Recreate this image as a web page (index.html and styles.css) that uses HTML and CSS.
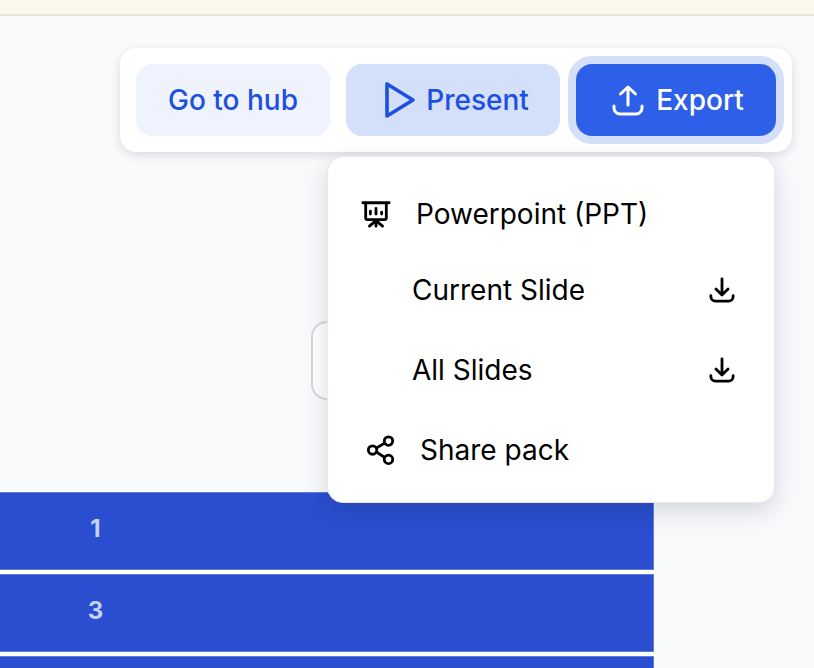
FILE: index.html
```html
<!DOCTYPE html>
<html lang="en">
<head>
  <meta charset="UTF-8">
  <title>Pack editor</title>
  <link rel="stylesheet" href="styles.css">
</head>
<body>
  <div class="banner"></div>
  <div class="main">
    <div class="toolbar-wrap">
      <div class="toolbar">
        <button class="btn btn-hub">Go to hub</button>
        <button class="btn btn-present">
          <svg width="34" height="38" viewBox="0 0 34 38" fill="none" stroke="currentColor" stroke-width="3.6" stroke-linejoin="round"><path d="M4 3v32l26-16z"/></svg>
          Present
        </button>
        <button class="btn btn-export">
          <svg width="32" height="32" viewBox="0 0 32 32" fill="none" stroke="currentColor" stroke-width="3" stroke-linecap="round" stroke-linejoin="round"><path d="M16 21V3M8.500 10 16 3l7.500 7M2 22v2a6 6 0 0 0 6 6h16a6 6 0 0 0 6-6v-2"/></svg>
          Export
        </button>
      </div>
      <div class="menu">
        <div class="menu-item menu-head">
          <svg width="30" height="30" viewBox="0 0 32 32" fill="none" stroke="currentColor" stroke-width="3" stroke-linecap="round"><path d="M2 4h28M5 4v16a2 2 0 0 0 2 2h18a2 2 0 0 0 2-2V4M16 22v7M16 23l-7 6M16 23l7 6M10 16v-3M16 16v-6M22 16v-2"/></svg>
          <span>Powerpoint (PPT)</span>
        </div>
        <div class="menu-item menu-sub">
          <span>Current Slide</span>
          <svg width="26" height="26" viewBox="0 0 28 28" fill="none" stroke="currentColor" stroke-width="3" stroke-linecap="round" stroke-linejoin="round"><path d="M14 2v17M7.500 13l6.500 6.500 6.500-6.500M2 20v1a5 5 0 0 0 5 5h14a5 5 0 0 0 5-5v-1"/></svg>
        </div>
        <div class="menu-item menu-sub">
          <span>All Slides</span>
          <svg width="26" height="26" viewBox="0 0 28 28" fill="none" stroke="currentColor" stroke-width="3" stroke-linecap="round" stroke-linejoin="round"><path d="M14 2v17M7.500 13l6.500 6.500 6.500-6.500M2 20v1a5 5 0 0 0 5 5h14a5 5 0 0 0 5-5v-1"/></svg>
        </div>
        <div class="menu-item menu-share">
          <svg width="30" height="30" viewBox="0 0 32 32" fill="none" stroke="currentColor" stroke-width="3"><circle cx="7" cy="16" r="4.500"/><circle cx="24" cy="6.500" r="4.500"/><circle cx="24" cy="26" r="4.500"/><path d="M11 14l9-5.500M11 18l9 6"/></svg>
          <span>Share pack</span>
        </div>
      </div>
    </div>
    <div class="ghost-btn"></div>
    <div class="rows">
      <div class="row"><span class="row-num">1</span></div>
      <div class="row"><span class="row-num">3</span></div>
      <div class="row"></div>
    </div>
  </div>
</body>
</html>
```

FILE: styles.css
```css
html, body {
  margin: 0;
  height: 100%;
  overflow: hidden;
}
body {
  font-family: Inter, "Liberation Sans", sans-serif;
  background-color: #f9fafc;
  color: #000;
}
.banner {
  height: 14px;
  background-color: #fdf8ec;
  border-bottom: 2px solid #e8e4d8;
}
.main {
  padding-top: 32px;
}
.toolbar-wrap {
  position: relative;
  z-index: 2;
  display: flex;
  justify-content: flex-end;
  padding-right: 22px;
}
.toolbar {
  display: flex;
  gap: 16px;
  padding: 16px;
  background-color: #fff;
  border-radius: 16px;
  box-shadow: 0 3px 10px rgba(20, 30, 60, 0.14);
}
.btn {
  display: flex;
  align-items: center;
  justify-content: center;
  height: 72px;
  border: none;
  border-radius: 16px;
  font-family: inherit;
  font-size: 28px;
  font-weight: 500;
  white-space: nowrap;
}
.btn-hub {
  width: 194px;
  background-color: #eef3fe;
  color: #1d4fe0;
}
.btn-present {
  width: 214px;
  gap: 9px;
  padding-left: 12px;
  background-color: #d4dffa;
  color: #1d4fe0;
}
.btn-export {
  width: 200px;
  gap: 12px;
  padding-left: 10px;
  background-color: #2d5fe8;
  color: #fff;
  box-shadow: 0 0 0 8px #d4dffa;
}
.menu {
  position: absolute;
  top: 108px;
  left: 327px;
  width: 448px;
  height: 347px;
  box-sizing: border-box;
  background-color: #fff;
  border: 1px solid #e6e8ee;
  border-radius: 16px;
  box-shadow: 0 8px 24px rgba(20, 30, 60, 0.16);
  font-size: 28px;
}
.menu-item {
  display: flex;
  align-items: center;
  height: 80px;
  box-sizing: border-box;
}
.menu-head {
  gap: 25px;
  height: 93px;
  padding: 20px 0 0 33px;
}
.menu-sub {
  justify-content: space-between;
  padding: 0 39px 0 84px;
}
.menu-share {
  gap: 24px;
  padding-left: 38px;
}
.ghost-btn {
  width: 200px;
  height: 79px;
  margin: 169px 0 0 311px;
  box-sizing: border-box;
  background-color: #fff;
  border: 2px solid #d5d7e0;
  border-radius: 16px;
}
.rows {
  display: flex;
  flex-direction: column;
  gap: 4px;
  width: 654px;
  margin-top: 92px;
  background-color: #fff;
}
.row {
  height: 78px;
  min-height: 78px;
  box-sizing: border-box;
  background-color: #2a4ecf;
  border: 1px solid #5f7ee0;
  border-left: none;
  color: #c5d1f5;
  font-size: 24px;
  font-weight: 700;
  line-height: 72px;
}
.row-num {
  display: inline-block;
  width: 191px;
  text-align: center;
}
```
